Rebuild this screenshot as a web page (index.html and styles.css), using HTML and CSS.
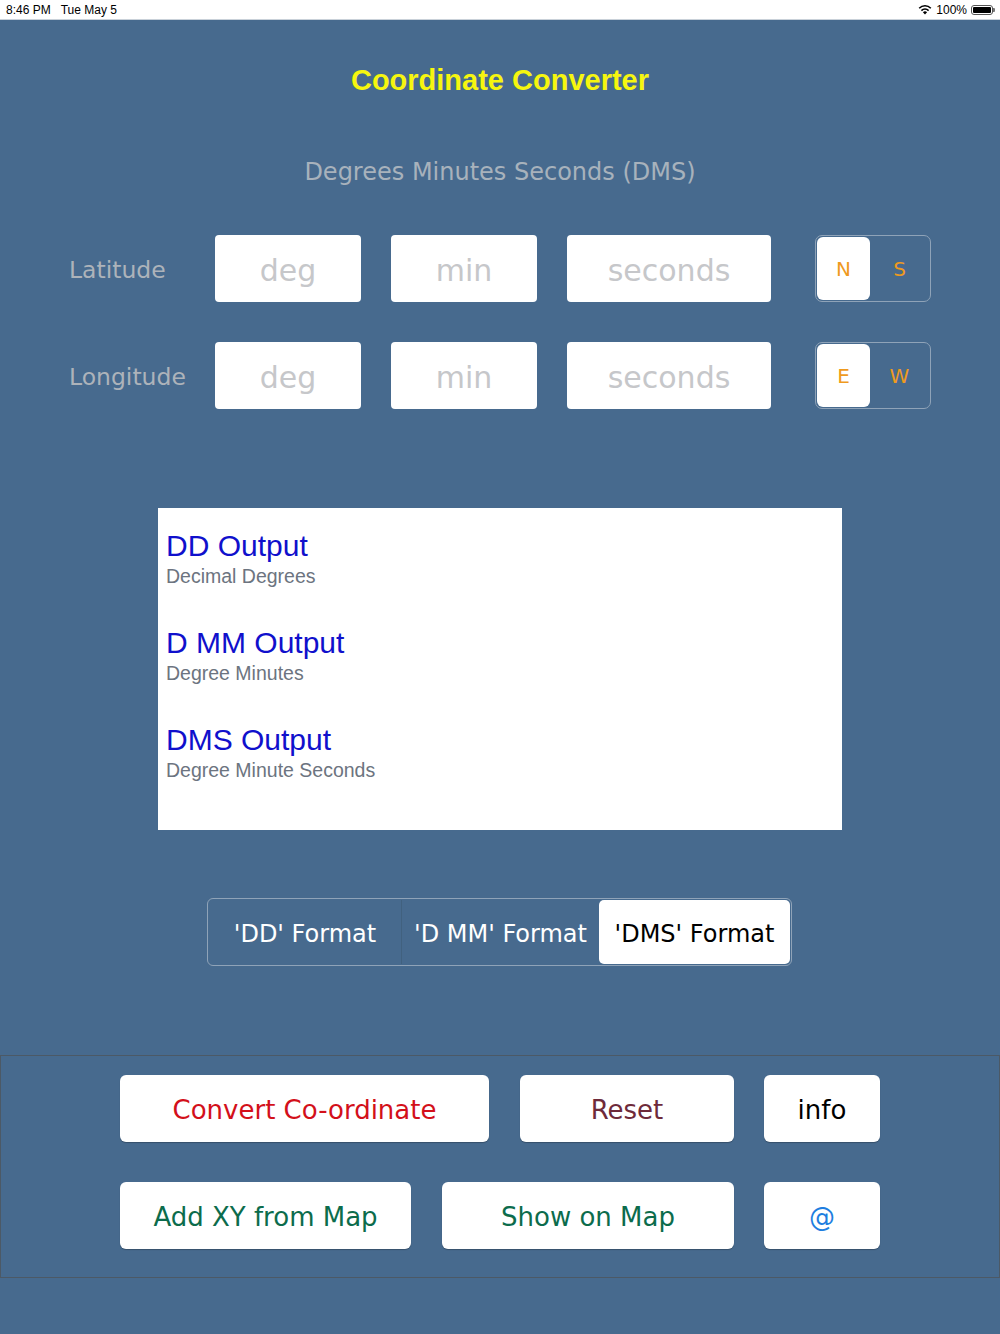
FILE: index.html
```html
<!DOCTYPE html>
<html>
<head>
    <title>Coordinate Converter</title>
    <link rel="stylesheet" href="styles.css">
</head>
<body>
    <div class="status">
        <span class="status-left">8:46 PM&nbsp;&nbsp;&nbsp;Tue May 5</span>
        <span class="status-right">
            <svg class="wifi" width="14" height="11" viewBox="0 0 14 11">
                <path d="M7 10.5 L4.9 8.2 A3 3 0 0 1 9.1 8.2 Z" fill="#000"/>
                <path d="M3.4 6.6 A5.2 5.2 0 0 1 10.6 6.6" stroke="#000" stroke-width="1.6" fill="none"/>
                <path d="M1.2 4.2 A8.2 8.2 0 0 1 12.8 4.2" stroke="#000" stroke-width="1.6" fill="none"/>
            </svg>
            100%
            <span class="battery"><span class="battery-fill"></span></span><span class="battery-tip"></span>
        </span>
    </div>

    <h1 class="title">Coordinate Converter</h1>
    <div class="subtitle">Degrees Minutes Seconds (DMS)</div>

    <div class="coord-row">
        <div class="coord-label">Latitude</div>
        <div class="field deg">deg</div>
        <div class="field deg">min</div>
        <div class="field sec">seconds</div>
        <div class="hemi">
            <div class="hemi-opt selected">N</div>
            <div class="hemi-opt">S</div>
        </div>
    </div>
    <div class="coord-row">
        <div class="coord-label">Longitude</div>
        <div class="field deg">deg</div>
        <div class="field deg">min</div>
        <div class="field sec">seconds</div>
        <div class="hemi">
            <div class="hemi-opt selected">E</div>
            <div class="hemi-opt">W</div>
        </div>
    </div>

    <div class="output">
        <div class="out-item">
            <div class="out-title">DD Output</div>
            <div class="out-sub">Decimal Degrees</div>
        </div>
        <div class="out-item">
            <div class="out-title">D MM Output</div>
            <div class="out-sub">Degree Minutes</div>
        </div>
        <div class="out-item">
            <div class="out-title">DMS Output</div>
            <div class="out-sub">Degree Minute Seconds</div>
        </div>
    </div>

    <div class="formats">
        <div class="fmt fmt-dd">'DD' Format</div>
        <div class="fmt fmt-dmm">'D MM' Format</div>
        <div class="fmt fmt-dms selected">'DMS' Format</div>
    </div>

    <div class="actions">
        <div class="action-row">
            <button class="btn convert">Convert Co-ordinate</button>
            <button class="btn reset">Reset</button>
            <button class="btn small info">info</button>
        </div>
        <div class="action-row">
            <button class="btn addxy">Add XY from Map</button>
            <button class="btn showmap">Show on Map</button>
            <button class="btn small at">@</button>
        </div>
    </div>
</body>
</html>
```

FILE: styles.css
```css
body {
    margin: 0;
    background-color: #476a8e;
    font-family: "DejaVu Sans", sans-serif;
    height: 1334px;
    overflow: hidden;
}
.status {
    height: 19px;
    background-color: #fff;
    border-bottom: 1px solid #c9d1d9;
    display: flex;
    justify-content: space-between;
    align-items: center;
    padding: 0 5px 0 6px;
    font-family: "Liberation Sans", Arial, sans-serif;
    font-size: 12px;
    color: #000;
}
.status-right {
    display: flex;
    align-items: center;
    gap: 3px;
}
.wifi {
    margin-right: 1px;
}
.battery {
    width: 22px;
    height: 10px;
    border: 1px solid #555;
    border-radius: 3px;
    padding: 1px;
    box-sizing: border-box;
    display: inline-block;
    margin-left: 1px;
}
.battery-fill {
    display: block;
    width: 100%;
    height: 100%;
    background-color: #000;
    border-radius: 1px;
}
.battery-tip {
    width: 2px;
    height: 4px;
    background-color: #777;
    border-radius: 0 1px 1px 0;
    margin-left: -3px;
}
.title {
    margin: 40px 0 0;
    text-align: center;
    font-family: "Liberation Sans", Arial, sans-serif;
    font-size: 29px;
    font-weight: bold;
    line-height: 40px;
    color: #f6f60f;
}
.subtitle {
    margin-top: 57px;
    text-align: center;
    font-size: 24px;
    line-height: 30px;
    color: #a8b2bc;
}
.coord-row {
    display: flex;
    align-items: center;
    margin-top: 48px;
    padding-left: 69px;
    height: 67px;
}
.coord-row + .coord-row {
    margin-top: 40px;
}
.coord-label {
    width: 146px;
    font-size: 23.5px;
    color: #adb3ba;
    padding-top: 2px;
}
.field {
    height: 67px;
    box-sizing: border-box;
    padding-top: 3px;
    background-color: #fff;
    border-radius: 4px;
    display: flex;
    align-items: center;
    justify-content: center;
    font-size: 30px;
    color: #c6c7ca;
    margin-right: 30px;
}
.field.deg {
    width: 146px;
}
.field.sec {
    width: 204px;
    margin-right: 44px;
}
.hemi {
    width: 116px;
    height: 67px;
    box-sizing: border-box;
    border: 1px solid #8fa3b8;
    border-radius: 7px;
    display: flex;
    padding: 1px;
}
.hemi-opt {
    flex: 1;
    display: flex;
    align-items: center;
    justify-content: center;
    font-size: 20px;
    color: #ef9a1e;
    padding-top: 1px;
}
.hemi-opt.selected {
    background-color: #fff;
    border-radius: 6px;
    flex: 0 0 53px;
}
.output {
    width: 684px;
    height: 322px;
    margin: 99px 0 0 158px;
    background-color: #fff;
    box-sizing: border-box;
    padding: 21px 8px 0;
    font-family: "Liberation Sans", Arial, sans-serif;
}
.out-item {
    margin-bottom: 36px;
}
.out-title {
    font-size: 30px;
    line-height: 34px;
    color: #1010cc;
}
.out-sub {
    font-size: 19.5px;
    line-height: 27px;
    color: #6c7480;
}
.formats {
    width: 585px;
    height: 68px;
    margin: 68px 0 0 207px;
    box-sizing: border-box;
    border: 1px solid #8fa3b8;
    border-radius: 6px;
    display: flex;
    padding: 1px;
}
.fmt {
    display: flex;
    align-items: center;
    justify-content: center;
    font-size: 24px;
    color: #fff;
    padding-top: 3px;
}
.fmt-dd {
    width: 192px;
    border-right: 1px solid #41617f;
}
.fmt-dmm {
    width: 197px;
}
.fmt.selected {
    flex: 1;
    background-color: #fff;
    color: #000;
    border-radius: 5px;
}
.actions {
    margin-top: 89px;
    height: 223px;
    box-sizing: border-box;
    border: 1px solid #4c5966;
    padding: 19px 0 0 119px;
}
.action-row {
    display: flex;
    gap: 30px;
    margin-bottom: 40px;
}
.btn {
    height: 67px;
    background-color: #fff;
    border: none;
    border-radius: 6px;
    box-shadow: 0 1px 1px rgba(0, 0, 0, 0.25);
    font-family: "DejaVu Sans", sans-serif;
    font-size: 26px;
    padding: 2px 0 0;
    cursor: pointer;
}
.convert {
    width: 369px;
    color: #d3101a;
}
.reset {
    width: 214px;
    margin-left: 1px;
    color: #6e2a3a;
}
.small {
    width: 116px;
}
.info {
    color: #000;
}
.addxy {
    width: 291px;
    color: #0c6c4c;
}
.showmap {
    width: 292px;
    margin-left: 1px;
    color: #0c6c4c;
}
.at {
    color: #1e7ee0;
}
```
